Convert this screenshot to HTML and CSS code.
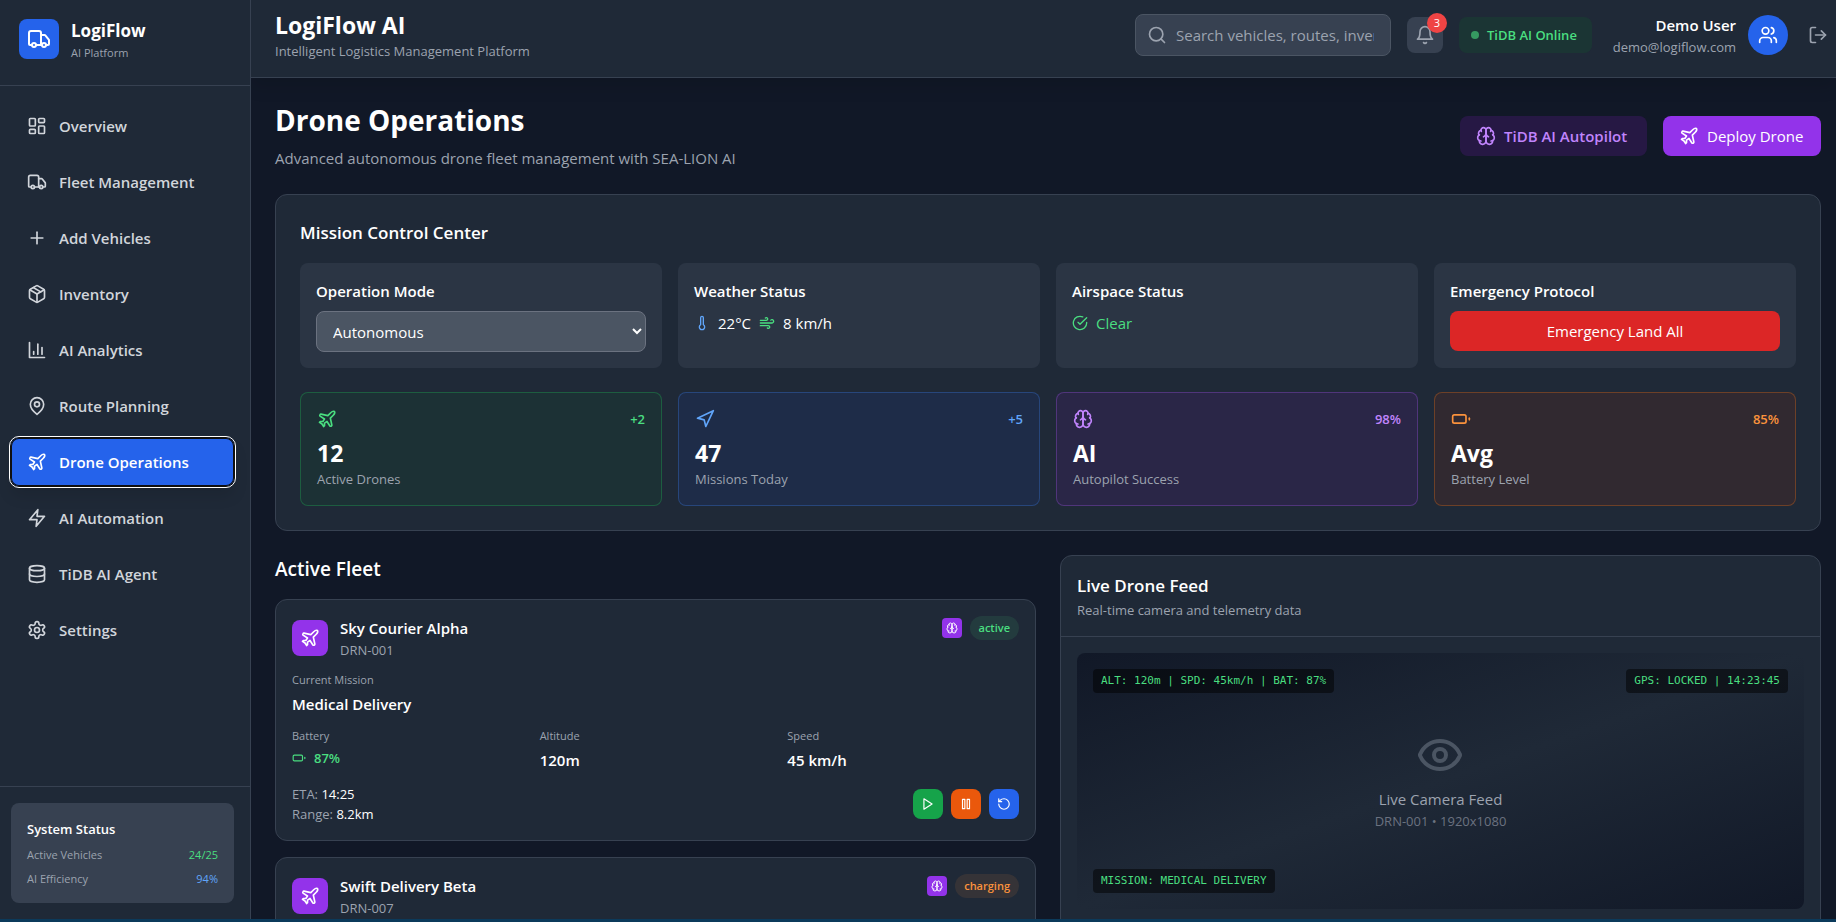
FILE: index.html
```html
<!DOCTYPE html>
<html lang="en">
<head>
    <meta charset="UTF-8" />
    <meta name="viewport" content="width=device-width, initial-scale=1.0" />
    <title>LogiFlow AI - Drone Operations</title>
    <link rel="stylesheet" href="styles.css">
</head>
<body>

    <!-- Icon set -->
    <svg class="icon-defs" aria-hidden="true">
        <symbol id="i-dashboard" viewBox="0 0 24 24"><rect width="7" height="9" x="3" y="3" rx="1"/><rect width="7" height="5" x="14" y="3" rx="1"/><rect width="7" height="9" x="14" y="12" rx="1"/><rect width="7" height="5" x="3" y="16" rx="1"/></symbol>
        <symbol id="i-truck" viewBox="0 0 24 24"><path d="M14 18V6a2 2 0 0 0-2-2H4a2 2 0 0 0-2 2v11a1 1 0 0 0 1 1h2"/><path d="M15 18H9"/><path d="M19 18h2a1 1 0 0 0 1-1v-3.65a1 1 0 0 0-.22-.624l-3.48-4.35A1 1 0 0 0 17.52 8H14"/><circle cx="17" cy="18" r="2"/><circle cx="7" cy="18" r="2"/></symbol>
        <symbol id="i-plus" viewBox="0 0 24 24"><path d="M5 12h14"/><path d="M12 5v14"/></symbol>
        <symbol id="i-package" viewBox="0 0 24 24"><path d="m7.5 4.27 9 5.15"/><path d="M21 8a2 2 0 0 0-1-1.73l-7-4a2 2 0 0 0-2 0l-7 4A2 2 0 0 0 3 8v8a2 2 0 0 0 1 1.73l7 4a2 2 0 0 0 2 0l7-4A2 2 0 0 0 21 16Z"/><path d="m3.3 7 8.7 5 8.7-5"/><path d="M12 22V12"/></symbol>
        <symbol id="i-chart" viewBox="0 0 24 24"><path d="M3 3v18h18"/><path d="M18 17V9"/><path d="M13 17V5"/><path d="M8 17v-3"/></symbol>
        <symbol id="i-pin" viewBox="0 0 24 24"><path d="M20 10c0 6-8 12-8 12s-8-6-8-12a8 8 0 0 1 16 0Z"/><circle cx="12" cy="10" r="3"/></symbol>
        <symbol id="i-plane" viewBox="0 0 24 24"><path d="M17.8 19.2 16 11l3.5-3.5C21 6 21.5 4 21 3c-1-.5-3 0-4.5 1.5L13 8 4.8 6.2c-.5-.1-.9.1-1.1.5l-.3.5c-.2.5-.1 1 .3 1.3L9 12l-2 3H4l-1 1 3 2 2 3 1-1v-3l3-2 3.5 5.3c.3.4.8.5 1.3.3l.5-.2c.4-.3.6-.7.5-1.2z"/></symbol>
        <symbol id="i-zap" viewBox="0 0 24 24"><path d="M13 2 3 14h9l-1 8 10-12h-9l1-8z"/></symbol>
        <symbol id="i-database" viewBox="0 0 24 24"><ellipse cx="12" cy="5" rx="9" ry="3"/><path d="M3 5v14a9 3 0 0 0 18 0V5"/><path d="M3 12a9 3 0 0 0 18 0"/></symbol>
        <symbol id="i-settings" viewBox="0 0 24 24"><path d="M12.22 2h-.44a2 2 0 0 0-2 2v.18a2 2 0 0 1-1 1.73l-.43.25a2 2 0 0 1-2 0l-.15-.08a2 2 0 0 0-2.73.73l-.22.38a2 2 0 0 0 .73 2.73l.15.1a2 2 0 0 1 1 1.72v.51a2 2 0 0 1-1 1.74l-.15.09a2 2 0 0 0-.73 2.73l.22.38a2 2 0 0 0 2.73.73l.15-.08a2 2 0 0 1 2 0l.43.25a2 2 0 0 1 1 1.73V20a2 2 0 0 0 2 2h.44a2 2 0 0 0 2-2v-.18a2 2 0 0 1 1-1.73l.43-.25a2 2 0 0 1 2 0l.15.08a2 2 0 0 0 2.73-.73l.22-.39a2 2 0 0 0-.73-2.73l-.15-.08a2 2 0 0 1-1-1.74v-.5a2 2 0 0 1 1-1.74l.15-.09a2 2 0 0 0 .73-2.73l-.22-.38a2 2 0 0 0-2.73-.73l-.15.08a2 2 0 0 1-2 0l-.43-.25a2 2 0 0 1-1-1.73V4a2 2 0 0 0-2-2z"/><circle cx="12" cy="12" r="3"/></symbol>
        <symbol id="i-search" viewBox="0 0 24 24"><circle cx="11" cy="11" r="8"/><path d="m21 21-4.3-4.3"/></symbol>
        <symbol id="i-bell" viewBox="0 0 24 24"><path d="M6 8a6 6 0 0 1 12 0c0 7 3 9 3 9H3s3-2 3-9"/><path d="M10.3 21a1.94 1.94 0 0 0 3.4 0"/></symbol>
        <symbol id="i-users" viewBox="0 0 24 24"><path d="M16 21v-2a4 4 0 0 0-4-4H6a4 4 0 0 0-4 4v2"/><circle cx="9" cy="7" r="4"/><path d="M22 21v-2a4 4 0 0 0-3-3.87"/><path d="M16 3.13a4 4 0 0 1 0 7.75"/></symbol>
        <symbol id="i-logout" viewBox="0 0 24 24"><path d="M9 21H5a2 2 0 0 1-2-2V5a2 2 0 0 1 2-2h4"/><path d="m16 17 5-5-5-5"/><path d="M21 12H9"/></symbol>
        <symbol id="i-brain" viewBox="0 0 24 24"><path d="M12 5a3 3 0 1 0-5.997.125 4 4 0 0 0-2.526 5.77 4 4 0 0 0 .556 6.588A4 4 0 1 0 12 18Z"/><path d="M12 5a3 3 0 1 1 5.997.125 4 4 0 0 1 2.526 5.77 4 4 0 0 1-.556 6.588A4 4 0 1 1 12 18Z"/><path d="M15 13a4.5 4.5 0 0 1-3-4 4.5 4.5 0 0 1-3 4"/><path d="M17.599 6.5a3 3 0 0 0 .399-1.375"/><path d="M6.003 5.125A3 3 0 0 0 6.401 6.5"/><path d="M3.477 10.896a4 4 0 0 1 .585-.396"/><path d="M19.938 10.5a4 4 0 0 1 .585.396"/><path d="M6 18a4 4 0 0 1-1.967-.516"/><path d="M19.967 17.484A4 4 0 0 1 18 18"/></symbol>
        <symbol id="i-thermometer" viewBox="0 0 24 24"><path d="M14 4v10.54a4 4 0 1 1-4 0V4a2 2 0 0 1 4 0Z"/></symbol>
        <symbol id="i-wind" viewBox="0 0 24 24"><path d="M17.7 7.7a2.5 2.5 0 1 1 1.8 4.3H2"/><path d="M9.6 4.6A2 2 0 1 1 11 8H2"/><path d="M12.6 19.4A2 2 0 1 0 14 16H2"/></symbol>
        <symbol id="i-check" viewBox="0 0 24 24"><path d="M22 11.08V12a10 10 0 1 1-5.93-9.14"/><path d="m9 11 3 3L22 4"/></symbol>
        <symbol id="i-navigation" viewBox="0 0 24 24"><path d="m3 11 19-9-9 19-2-8-8-2z"/></symbol>
        <symbol id="i-battery" viewBox="0 0 24 24"><rect width="16" height="10" x="2" y="7" rx="2"/><path d="M22 11v2"/></symbol>
        <symbol id="i-play" viewBox="0 0 24 24"><path d="m5 3 14 9-14 9V3z"/></symbol>
        <symbol id="i-pause" viewBox="0 0 24 24"><rect width="4" height="16" x="6" y="4"/><rect width="4" height="16" x="14" y="4"/></symbol>
        <symbol id="i-rotate" viewBox="0 0 24 24"><path d="M3 12a9 9 0 1 0 9-9 9.75 9.75 0 0 0-6.74 2.74L3 8"/><path d="M3 3v5h5"/></symbol>
        <symbol id="i-eye" viewBox="0 0 24 24"><path d="M2.062 12.348a1 1 0 0 1 0-.696 10.75 10.75 0 0 1 19.876 0 1 1 0 0 1 0 .696 10.75 10.75 0 0 1-19.876 0"/><circle cx="12" cy="12" r="3"/></symbol>
    </svg>

    <div class="app">
        <aside class="sidebar">
            <div class="brand">
                <div class="brand-logo"><svg class="icon icon-lg"><use href="#i-truck"/></svg></div>
                <div>
                    <div class="brand-name">LogiFlow</div>
                    <div class="brand-sub">AI Platform</div>
                </div>
            </div>

            <nav class="nav">
                <button class="nav-item"><svg class="icon"><use href="#i-dashboard"/></svg>Overview</button>
                <button class="nav-item"><svg class="icon"><use href="#i-truck"/></svg>Fleet Management</button>
                <button class="nav-item"><svg class="icon"><use href="#i-plus"/></svg>Add Vehicles</button>
                <button class="nav-item"><svg class="icon"><use href="#i-package"/></svg>Inventory</button>
                <button class="nav-item"><svg class="icon"><use href="#i-chart"/></svg>AI Analytics</button>
                <button class="nav-item"><svg class="icon"><use href="#i-pin"/></svg>Route Planning</button>
                <button class="nav-item active"><svg class="icon"><use href="#i-plane"/></svg>Drone Operations</button>
                <button class="nav-item"><svg class="icon"><use href="#i-zap"/></svg>AI Automation</button>
                <button class="nav-item"><svg class="icon"><use href="#i-database"/></svg>TiDB AI Agent</button>
                <button class="nav-item"><svg class="icon"><use href="#i-settings"/></svg>Settings</button>
            </nav>

            <div class="sidebar-footer">
                <div class="status-box">
                    <h3>System Status</h3>
                    <div class="status-row"><span>Active Vehicles</span><span class="green">24/25</span></div>
                    <div class="status-row"><span>AI Efficiency</span><span class="blue">94%</span></div>
                </div>
            </div>
        </aside>

        <div class="content">
            <header class="topbar">
                <div>
                    <div class="topbar-title">LogiFlow AI</div>
                    <p class="small muted">Intelligent Logistics Management Platform</p>
                </div>
                <div class="topbar-right">
                    <div class="search">
                        <svg class="icon"><use href="#i-search"/></svg>
                        <input type="text" aria-label="Search" placeholder="Search vehicles, routes, inventory..." />
                    </div>
                    <button class="bell" aria-label="Notifications">
                        <svg class="icon"><use href="#i-bell"/></svg>
                        <span class="bell-count">3</span>
                    </button>
                    <div class="online"><span class="dot"></span>TiDB AI Online</div>
                    <div class="user">
                        <div class="user-info">
                            <div class="user-name">Demo User</div>
                            <div class="small muted">demo@logiflow.com</div>
                        </div>
                        <div class="avatar"><svg class="icon"><use href="#i-users"/></svg></div>
                        <button class="logout" aria-label="Log out"><svg class="icon"><use href="#i-logout"/></svg></button>
                    </div>
                </div>
            </header>

            <main class="main">
                <div class="page-head">
                    <div>
                        <h1>Drone Operations</h1>
                        <p class="page-sub muted">Advanced autonomous drone fleet management with SEA-LION AI</p>
                    </div>
                    <div class="page-actions">
                        <div class="autopilot"><svg class="icon"><use href="#i-brain"/></svg>TiDB AI Autopilot</div>
                        <button class="deploy"><svg class="icon"><use href="#i-plane"/></svg>Deploy Drone</button>
                    </div>
                </div>

                <section class="card mission">
                    <h2>Mission Control Center</h2>
                    <div class="grid-4">
                        <div class="control">
                            <label for="operation_mode">Operation Mode</label>
                            <select id="operation_mode">
                                <option>Autonomous</option>
                                <option>Manual</option>
                            </select>
                        </div>
                        <div class="control">
                            <h3>Weather Status</h3>
                            <div class="control-line">
                                <svg class="icon icon-sm blue"><use href="#i-thermometer"/></svg>
                                <span>22°C</span>
                                <svg class="icon icon-sm green"><use href="#i-wind"/></svg>
                                <span>8 km/h</span>
                            </div>
                        </div>
                        <div class="control">
                            <h3>Airspace Status</h3>
                            <div class="control-line green">
                                <svg class="icon icon-sm"><use href="#i-check"/></svg>
                                <span>Clear</span>
                            </div>
                        </div>
                        <div class="control">
                            <h3>Emergency Protocol</h3>
                            <button class="emergency">Emergency Land All</button>
                        </div>
                    </div>

                    <div class="grid-4">
                        <div class="stat stat-green">
                            <div class="stat-top"><svg class="icon"><use href="#i-plane"/></svg><span>+2</span></div>
                            <div class="stat-value">12</div>
                            <div class="small muted">Active Drones</div>
                        </div>
                        <div class="stat stat-blue">
                            <div class="stat-top"><svg class="icon"><use href="#i-navigation"/></svg><span>+5</span></div>
                            <div class="stat-value">47</div>
                            <div class="small muted">Missions Today</div>
                        </div>
                        <div class="stat stat-purple">
                            <div class="stat-top"><svg class="icon"><use href="#i-brain"/></svg><span>98%</span></div>
                            <div class="stat-value">AI</div>
                            <div class="small muted">Autopilot Success</div>
                        </div>
                        <div class="stat stat-orange">
                            <div class="stat-top"><svg class="icon"><use href="#i-battery"/></svg><span>85%</span></div>
                            <div class="stat-value">Avg</div>
                            <div class="small muted">Battery Level</div>
                        </div>
                    </div>
                </section>

                <div class="grid-2">
                    <section class="fleet">
                        <h2 class="fleet-title">Active Fleet</h2>

                        <article class="card drone">
                            <div class="drone-head">
                                <div class="drone-icon"><svg class="icon"><use href="#i-plane"/></svg></div>
                                <div>
                                    <h3>Sky Courier Alpha</h3>
                                    <div class="small muted">DRN-001</div>
                                </div>
                                <div class="drone-tags">
                                    <span class="ai-tag"><svg class="icon icon-xs"><use href="#i-brain"/></svg></span>
                                    <span class="badge badge-active">active</span>
                                </div>
                            </div>
                            <div class="field">
                                <div class="field-label">Current Mission</div>
                                <div class="field-value">Medical Delivery</div>
                            </div>
                            <div class="grid-3">
                                <div class="field">
                                    <div class="field-label">Battery</div>
                                    <div class="battery green"><svg class="icon icon-14"><use href="#i-battery"/></svg>87%</div>
                                </div>
                                <div class="field">
                                    <div class="field-label">Altitude</div>
                                    <div class="field-value">120m</div>
                                </div>
                                <div class="field">
                                    <div class="field-label">Speed</div>
                                    <div class="field-value">45 km/h</div>
                                </div>
                            </div>
                            <div class="drone-foot">
                                <div class="small muted">
                                    <div>ETA: <span class="white">14:25</span></div>
                                    <div>Range: <span class="white">8.2km</span></div>
                                </div>
                                <div class="drone-actions">
                                    <button class="action action-play" aria-label="Start"><svg class="icon icon-14"><use href="#i-play"/></svg></button>
                                    <button class="action action-pause" aria-label="Pause"><svg class="icon icon-14"><use href="#i-pause"/></svg></button>
                                    <button class="action action-return" aria-label="Return"><svg class="icon icon-14"><use href="#i-rotate"/></svg></button>
                                </div>
                            </div>
                        </article>

                        <article class="card drone">
                            <div class="drone-head">
                                <div class="drone-icon"><svg class="icon"><use href="#i-plane"/></svg></div>
                                <div>
                                    <h3>Swift Delivery Beta</h3>
                                    <div class="small muted">DRN-007</div>
                                </div>
                                <div class="drone-tags">
                                    <span class="ai-tag"><svg class="icon icon-xs"><use href="#i-brain"/></svg></span>
                                    <span class="badge badge-charging">charging</span>
                                </div>
                            </div>
                        </article>
                    </section>

                    <section class="card feed">
                        <div class="feed-head">
                            <h2>Live Drone Feed</h2>
                            <p class="small muted">Real-time camera and telemetry data</p>
                        </div>
                        <div class="feed-body">
                            <div class="camera">
                                <div class="camera-center">
                                    <svg class="icon icon-eye"><use href="#i-eye"/></svg>
                                    <div>Live Camera Feed</div>
                                    <div class="small dim">DRN-001 • 1920x1080</div>
                                </div>
                                <div class="osd osd-tl">ALT: 120m | SPD: 45km/h | BAT: 87%</div>
                                <div class="osd osd-tr">GPS: LOCKED | 14:23:45</div>
                                <div class="osd osd-bl">MISSION: MEDICAL DELIVERY</div>
                            </div>
                        </div>
                    </section>
                </div>
            </main>
        </div>
    </div>

</body>
</html>
```
FILE: styles.css
```css
* {
    box-sizing: border-box;
    margin: 0;
    padding: 0;
}

body {
    font-family: "Open Sans", "Noto Sans", sans-serif;
    font-size: 15px;
    line-height: 24px;
    color: #ffffff;
    background-color: #111827;
    height: 100vh;
    border-bottom: 3px solid #0b3a5b;
    overflow: hidden;
}

button, input, select {
    font: inherit;
    color: inherit;
    border: none;
    background: none;
}

button {
    cursor: pointer;
}

/* Icons */
.icon-defs {
    display: none;
}

.icon {
    width: 20px;
    height: 20px;
    flex-shrink: 0;
    fill: none;
    stroke: currentColor;
    stroke-width: 2;
    stroke-linecap: round;
    stroke-linejoin: round;
}

.icon-lg { width: 24px; height: 24px; }
.icon-sm { width: 16px; height: 16px; }
.icon-14 { width: 14px; height: 14px; }
.icon-xs { width: 12px; height: 12px; }

/* Text helpers */
.small { font-size: 13px; line-height: 20px; }
.muted { color: #9ca3af; }
.dim { color: #6b7280; }
.white { color: #ffffff; }
.green { color: #4ade80; }
.blue { color: #60a5fa; }

.app {
    display: flex;
    height: 100%;
}

/* Sidebar */
.sidebar {
    width: 251px;
    flex-shrink: 0;
    display: flex;
    flex-direction: column;
    background-color: #1f2937;
    border-right: 1px solid #374151;
}

.brand {
    display: flex;
    align-items: center;
    gap: 12px;
    padding: 17px 19px 24px;
    border-bottom: 1px solid #374151;
}

.brand-logo {
    display: flex;
    padding: 8px;
    border-radius: 8px;
    background-color: #2563eb;
}

.brand-name {
    font-size: 17px;
    line-height: 28px;
    font-weight: bold;
}

.brand-sub {
    font-size: 11px;
    line-height: 16px;
    color: #9ca3af;
}

.nav {
    flex: 1;
    display: flex;
    flex-direction: column;
    gap: 8px;
    padding: 16px 16px 16px 11px;
}

.nav-item {
    display: flex;
    align-items: center;
    gap: 12px;
    padding: 12px 16px;
    border-radius: 8px;
    color: #d1d5db;
    font-weight: 600;
    text-align: left;
}

    /* two-tone focus ring */
    .nav-item.active {
        color: #ffffff;
        background-color: #2563eb;
        outline: 1px solid #ffffff;
        outline-offset: 1px;
        box-shadow: inset 0 0 0 1px #101010, 0 0 0 1px #101010, 0 10px 15px rgba(0,0,0,0.1);
    }

.sidebar-footer {
    padding: 16px 16px 16px 11px;
    border-top: 1px solid #374151;
}

.status-box {
    display: flex;
    flex-direction: column;
    gap: 8px;
    padding: 16px;
    border-radius: 8px;
    background-color: #374151;
}

    .status-box h3 {
        font-size: 13px;
        line-height: 20px;
        font-weight: 600;
    }

.status-row {
    display: flex;
    justify-content: space-between;
    font-size: 11px;
    line-height: 16px;
}

    .status-row span:first-child {
        color: #9ca3af;
    }

/* Top bar */
.content {
    flex: 1;
    min-width: 0;
    display: flex;
    flex-direction: column;
}

.topbar {
    display: flex;
    justify-content: space-between;
    align-items: center;
    padding: 9px 0 16px 24px;
    background-color: #1f2937;
    border-bottom: 1px solid #374151;
    box-shadow: 0 10px 15px rgba(0,0,0,0.1);
    clip-path: inset(0 0 -30px 0);
    z-index: 1;
}

.topbar-title {
    font-size: 23px;
    line-height: 32px;
    font-weight: bold;
}

.topbar-right {
    display: flex;
    align-items: center;
    gap: 16px;
}

.search {
    position: relative;
}

    .search .icon {
        position: absolute;
        left: 12px;
        top: 11px;
        color: #9ca3af;
    }

    .search input {
        display: block;
        width: 256px;
        height: 42px;
        padding: 8px 16px 8px 40px;
        border: 1px solid #4b5563;
        border-radius: 8px;
        background-color: #374151;
    }

        .search input::placeholder {
            color: #9ca3af;
        }

.bell {
    position: relative;
    display: flex;
    padding: 8px;
    border-radius: 8px;
    color: #9ca3af;
    background-color: #374151;
}

.bell-count {
    position: absolute;
    top: -4px;
    right: -4px;
    width: 20px;
    border-radius: 50%;
    font-size: 11px;
    line-height: 20px;
    text-align: center;
    color: #ffffff;
    background-color: #ef4444;
}

.online {
    display: flex;
    align-items: center;
    gap: 8px;
    min-width: 133px;
    padding: 8px 12px;
    border-radius: 8px;
    font-size: 13px;
    line-height: 20px;
    font-weight: 600;
    color: #4ade80;
    background-color: rgba(20,83,45,0.3);
}

.dot {
    width: 8px;
    height: 8px;
    border-radius: 50%;
    background-color: #4ade80;
    opacity: 0.6;
}

.user {
    display: flex;
    align-items: center;
    gap: 12px;
}

.user-info {
    min-width: 128px;
    text-align: right;
}

.user-name {
    font-weight: 600;
}

.avatar {
    display: flex;
    padding: 10px;
    border-radius: 50%;
    background-color: #2563eb;
}

.logout {
    display: flex;
    padding: 8px;
    color: #9ca3af;
}

/* Page */
.main {
    flex: 1;
    min-height: 0;
    display: flex;
    flex-direction: column;
    gap: 24px;
    padding: 24px 15px 24px 24px;
    overflow-y: auto;
    scrollbar-width: none;
}

.page-head {
    display: flex;
    justify-content: space-between;
    align-items: center;
}

h1 {
    font-size: 28px;
    line-height: 36px;
    font-weight: bold;
}

.page-sub {
    margin-top: 8px;
}

.page-actions {
    display: flex;
    gap: 16px;
}

.autopilot, .deploy {
    display: flex;
    align-items: center;
    gap: 8px;
    padding: 8px 16px;
    border-radius: 8px;
}

.autopilot {
    min-width: 187px;
    font-weight: 600;
    color: #c084fc;
    background-color: rgba(88,28,135,0.3);
}

.deploy {
    min-width: 158px;
    background-color: #9333ea;
}

.card {
    border: 1px solid #374151;
    border-radius: 12px;
    background-color: #1f2937;
}

h2 {
    font-size: 17px;
    line-height: 28px;
    font-weight: 600;
}

h3 {
    font-size: 15px;
    line-height: 24px;
    font-weight: 600;
}

/* Mission control */
.mission {
    padding: 24px;
    flex-shrink: 0;
}

    .mission h2 {
        margin-bottom: 16px;
    }

.grid-4 {
    display: grid;
    grid-template-columns: repeat(4, 1fr);
    gap: 16px;
}

    .grid-4 + .grid-4 {
        margin-top: 24px;
    }

.control {
    display: flex;
    flex-direction: column;
    gap: 8px;
    padding: 16px;
    border-radius: 8px;
    background-color: rgba(55,65,81,0.5);
}

    .control label {
        font-weight: 600;
    }

    .control select {
        width: 100%;
        height: 41px;
        padding: 8px 12px;
        border: 1px solid #6b7280;
        border-radius: 8px;
        background-color: #4b5563;
    }

.control-line {
    display: flex;
    align-items: center;
    gap: 8px;
}

.emergency {
    height: 40px;
    border-radius: 8px;
    background-color: #dc2626;
}

.stat {
    padding: 16px;
    border: 1px solid;
    border-radius: 8px;
}

.stat-top {
    display: flex;
    justify-content: space-between;
    align-items: center;
    margin-bottom: 8px;
    font-size: 13px;
    line-height: 20px;
    font-weight: 600;
}

.stat-value {
    font-size: 23px;
    line-height: 32px;
    font-weight: bold;
}

.stat-green {
    border-color: rgba(34,197,94,0.3);
    background-color: rgba(20,83,45,0.2);
}

    .stat-green .stat-top { color: #4ade80; }

.stat-blue {
    border-color: rgba(59,130,246,0.3);
    background-color: rgba(30,58,138,0.2);
}

    .stat-blue .stat-top { color: #60a5fa; }

.stat-purple {
    border-color: rgba(168,85,247,0.3);
    background-color: rgba(88,28,135,0.2);
}

    .stat-purple .stat-top { color: #c084fc; }

.stat-orange {
    border-color: rgba(249,115,22,0.3);
    background-color: rgba(124,45,18,0.2);
}

    .stat-orange .stat-top { color: #fb923c; }

/* Fleet */
.grid-2 {
    display: grid;
    grid-template-columns: 1fr 1fr;
    gap: 24px;
}

.fleet {
    display: flex;
    flex-direction: column;
    gap: 16px;
}

.fleet-title {
    font-size: 19px;
}

.drone {
    display: flex;
    flex-direction: column;
    gap: 12px;
    padding: 16px;
}

.drone-head {
    display: flex;
    align-items: center;
    gap: 12px;
}

.drone-icon {
    display: flex;
    padding: 8px;
    border-radius: 8px;
    background-color: #9333ea;
}

.drone-tags {
    display: flex;
    align-items: center;
    align-self: flex-start;
    gap: 8px;
    margin-left: auto;
}

.ai-tag {
    display: flex;
    padding: 4px;
    border-radius: 4px;
    background-color: #9333ea;
}

.badge {
    padding: 4px 9px;
    border-radius: 12px;
    font-size: 11px;
    line-height: 16px;
    font-weight: 600;
}

.badge-active {
    color: #4ade80;
    background-color: rgba(74,222,128,0.1);
}

.badge-charging {
    color: #fb923c;
    background-color: rgba(251,146,60,0.1);
}

.grid-3 {
    display: grid;
    grid-template-columns: repeat(3, 1fr);
    gap: 16px;
}

.field {
    display: flex;
    flex-direction: column;
    gap: 4px;
}

.field-label {
    font-size: 11px;
    line-height: 16px;
    color: #9ca3af;
}

.field-value {
    font-weight: 600;
}

.battery {
    display: flex;
    align-items: center;
    gap: 8px;
    font-size: 13px;
    line-height: 20px;
    font-weight: 600;
}

.drone-foot {
    display: flex;
    justify-content: space-between;
    align-items: center;
}

.drone-actions {
    display: flex;
    gap: 8px;
}

.action {
    display: flex;
    padding: 8px;
    border-radius: 8px;
}

.action-play { background-color: #16a34a; }
.action-pause { background-color: #ea580c; }
.action-return { background-color: #2563eb; }

/* Live feed */
.feed-head {
    padding: 16px;
    border-bottom: 1px solid #374151;
}

.feed-body {
    padding: 16px;
}

.camera {
    position: relative;
    display: flex;
    align-items: center;
    justify-content: center;
    height: 256px;
    border-radius: 8px;
    background: linear-gradient(to bottom right, #111827, #1f2937, #111827);
}

.camera-center {
    text-align: center;
    color: #9ca3af;
}

.icon-eye {
    display: block;
    width: 48px;
    height: 48px;
    margin: 0 auto 8px;
    color: #4b5563;
}

.osd {
    position: absolute;
    padding: 4px 8px;
    border-radius: 4px;
    font-family: "DejaVu Sans Mono", monospace;
    font-size: 11px;
    line-height: 16px;
    color: #4ade80;
    background-color: rgba(0,0,0,0.5);
}

.osd-tl { top: 16px; left: 16px; }
.osd-tr { top: 16px; right: 16px; }
.osd-bl { bottom: 16px; left: 16px; }
```
